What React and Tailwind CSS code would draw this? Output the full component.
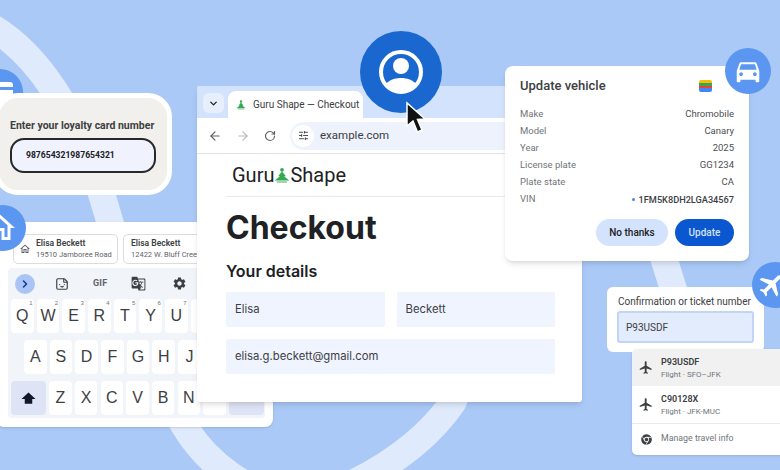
import { ArrowLeft, ArrowRight, ChevronDown, ChevronRight, RotateCw, SlidersHorizontal, Sticker } from "lucide-react";
import { FaChrome } from "react-icons/fa";
import { MdDirectionsCar, MdFlight, MdGTranslate, MdOutlineHome, MdSettings } from "react-icons/md";

const row1 = ["Q", "W", "E", "R", "T", "Y", "U"];
const row2 = ["A", "S", "D", "F", "G", "H", "J"];
const row3 = ["Z", "X", "C", "V", "B", "N"];

const vehicle = [
  ["Make", "Chromobile"],
  ["Model", "Canary"],
  ["Year", "2025"],
  ["License plate", "GG1234"],
  ["Plate state", "CA"],
];

// small green figure used in the logo and the tab
function GuruMark({ className }) {
  return (
    <svg viewBox="0 0 24 24" className={className} fill="#34a853">
      <circle cx="12" cy="3.5" r="2.8" />
      <path d="M12 6 L18 13 L15 13 L23 19.5 L1 19.5 L9 13 L6 13 Z" />
      <rect x="4" y="20.5" width="16" height="2.5" rx="1.2" fill="#81c995" />
    </svg>
  );
}

function Key({ label, num }) {
  return (
    <div className="relative flex h-[34px] w-[22.5px] shrink-0 items-center justify-center rounded-[4px] bg-white font-['Liberation_Sans',sans-serif] text-[16px] text-[#3c4043]">
      {label}
      {num && <span className="absolute right-[1px] top-[0px] text-[6px] leading-[8px] text-[#70757a]">{num}</span>}
    </div>
  );
}

function Address({ name, street, width, icon }) {
  return (
    <div className={`flex h-[30px] shrink-0 items-center gap-[5px] overflow-hidden rounded-[5px] border border-[#dadce0] bg-white pl-[5px] ${width}`}>
      {icon && <MdOutlineHome className="shrink-0 text-[#5f6368]" size={12} />}
      <div className="whitespace-nowrap">
        <div className="text-[8.5px] font-semibold leading-[11px] text-[#3c4043]">{name}</div>
        <div className="text-[7.5px] leading-[11px] text-[#5f6368]">{street}</div>
      </div>
    </div>
  );
}

function Badge({ className, children }) {
  return (
    <div className={`absolute flex h-[46px] w-[46px] items-center justify-center rounded-full bg-[#5b96f0] text-white ${className}`}>
      {children}
    </div>
  );
}

function Suggestion({ code, route, active }) {
  return (
    <div className={`flex h-[37px] items-center pl-[6px] ${active ? "bg-[#f1f1f1]" : "bg-white"}`}>
      <MdFlight className="w-[16px] shrink-0 text-[#3c4043]" size={15} />
      <div className="ml-[7px] pt-[1px]">
        <div className="text-[9px] font-semibold leading-[13px] text-[#3c4043]">{code}</div>
        <div className="text-[8px] leading-[12px] text-[#70757a]">{route}</div>
      </div>
    </div>
  );
}

export default function App() {
  return (
    <div className="relative h-[470px] w-[780px] overflow-hidden bg-[#abc9f7] font-['Roboto',sans-serif]">
      {/* Bogen im Hintergrund */}
      <svg className="absolute inset-0" width="780" height="470" fill="none" stroke="#dfeafc" strokeWidth="27">
        <path d="M-10 26 C35 52 78 110 107 212 C130 290 150 370 185 427 C205 460 250 500 300 497 C350 495 420 450 453 402 L480 340" />
        <path d="M658 240 L680 310" />
      </svg>

      {/* Tastatur */}
      <div className="absolute left-[-4px] top-[222px] h-[205px] w-[277px] rounded-[8px] bg-white pl-[12px] pr-[8px] pt-[12px] shadow-sm">
        <div className="flex gap-[5px] pl-[5px]">
          <Address name="Elisa Beckett" street="19510 Jamboree Road" width="w-[105px]" icon />
          <Address name="Elisa Beckett" street="12422 W. Bluff Creek" width="w-[105px] pl-[7px]" />
        </div>
        <div className="mt-[4px] h-[150px] rounded-[4px] bg-[#f1f4f9]">
          <div className="flex h-[31px] items-center pl-[7px] text-[#3c4043]">
            <div className="flex h-[20px] w-[20px] items-center justify-center rounded-full bg-[#aac4f5] text-[#0b3d91]">
              <ChevronRight size={12} strokeWidth={3} />
            </div>
            <Sticker className="ml-[20px]" size={14} />
            <span className="ml-[24px] text-[9px] font-bold tracking-wide text-[#5f6368]">GIF</span>
            <MdGTranslate className="ml-[24px]" size={15} />
            <MdSettings className="ml-[26px]" size={15} />
          </div>
          <div className="flex gap-[3.2px] pl-[3px]">
            {row1.map((k, i) => (
              <Key key={k} label={k} num={String(i + 1)} />
            ))}
            <Key label="" />
          </div>
          <div className="mt-[7px] flex gap-[3.2px] pl-[16px]">
            {row2.map((k) => (
              <Key key={k} label={k} />
            ))}
          </div>
          <div className="mt-[7px] flex gap-[3.2px] pl-[3px]">
            <div className="flex h-[34px] w-[35px] shrink-0 items-center justify-center rounded-[4px] bg-[#dfe3f6]">
              <svg viewBox="0 0 16 16" width="15" height="15" fill="#111827">
                <path d="M8 1.5 L15.5 8.5 L12 8.5 L12 13.5 L4 13.5 L4 8.5 L0.5 8.5 Z" />
              </svg>
            </div>
            {row3.map((k) => (
              <Key key={k} label={k} />
            ))}
            <Key label="" />
            <div className="h-[34px] w-[35px] shrink-0 rounded-[4px] bg-[#dfe3f6]" />
          </div>
        </div>
      </div>

      {/* Browser */}
      <div className="absolute left-[197px] top-[86px] h-[316px] w-[385px] overflow-hidden rounded-[3px] bg-white shadow-md">
        <div className="flex h-[32px] items-end bg-[#d3e3fd] pl-[6px]">
          <div className="mb-[5px] flex h-[20px] w-[21px] items-center justify-center rounded-[6px] bg-[#e8effc] text-[#202124]">
            <ChevronDown size={11} strokeWidth={3} />
          </div>
          <div className="ml-[4px] flex h-[27px] w-[135px] items-center gap-[7px] rounded-t-[8px] bg-white pl-[8px]">
            <GuruMark className="h-[10px] w-[10px]" />
            <span className="whitespace-nowrap text-[10px] text-[#3c4043]">Guru Shape — Checkout</span>
          </div>
        </div>
        <div className="flex h-[36px] items-center border-b border-[#dfe1e5] pl-[11px] text-[#5f6368]">
          <ArrowLeft size={14} />
          <ArrowRight className="ml-[14px] text-[#b5b9be]" size={14} />
          <RotateCw className="ml-[14px]" size={12} strokeWidth={2.4} />
          <div className="ml-[14px] flex h-[28px] flex-1 items-center rounded-l-[14px] bg-[#edf2fc] pl-[2px]">
            <div className="flex h-[22px] w-[22px] items-center justify-center rounded-full bg-white">
              <SlidersHorizontal className="text-[#3c4043]" size={11} />
            </div>
            <span className="ml-[6px] text-[11.5px] text-[#3c4043]">example.com</span>
          </div>
        </div>
        <div className="pl-[29px] pr-[27px] font-['Inter',sans-serif]">
          <div className="flex h-[43px] items-center border-b border-[#e8eaed] pl-[6px] font-['Roboto',sans-serif] text-[20px] leading-none text-[#202124]">
            Guru<GuruMark className="h-[17px] w-[16px]" />Shape
          </div>
          <h1 className="mt-[11px] text-[32px] font-bold leading-[40px] text-[#202124]">Checkout</h1>
          <h2 className="mt-[12px] text-[16px] font-semibold leading-[22px] text-[#202124]">Your details</h2>
          <div className="mt-[10px] grid grid-cols-2 gap-[12px] text-[11.3px] text-[#3c4043]">
            <div className="flex h-[35px] items-center rounded-[2px] bg-[#f0f4fe] pl-[9px]">Elisa</div>
            <div className="flex h-[35px] items-center rounded-[2px] bg-[#f0f4fe] pl-[9px]">Beckett</div>
            <div className="col-span-2 flex h-[35px] items-center rounded-[2px] bg-[#f0f4fe] pl-[9px]">elisa.g.beckett@gmail.com</div>
          </div>
        </div>
      </div>

      {/* Treuekarte */}
      <Badge className="left-[-23px] top-[69px]">
        <svg viewBox="0 0 26 20" width="26" height="20" fill="white">
          <path d="M0 3 Q0 0 3 0 H23 Q26 0 26 3 V5 H0 Z M0 8 H26 V17 Q26 20 23 20 H3 Q0 20 0 17 Z" />
        </svg>
      </Badge>
      <div className="absolute left-[-6px] top-[93px] h-[102px] w-[178px] rounded-[24px] border-[5px] border-white bg-[#f2f0ec] pl-[11px] pt-[21px]">
        <div className="whitespace-nowrap text-[10.5px] font-bold leading-[14px] text-[#3c4043]">Enter your loyalty card number</div>
        <div className="mt-[5px] flex h-[35px] w-[146px] items-center rounded-[14px] border-2 border-[#26282c] bg-[#f0f3fd] pl-[14px] text-[8.6px] font-bold text-[#202124]">
          987654321987654321
        </div>
      </div>
      <Badge className="left-[-20px] top-[205px]">
        <MdOutlineHome className="mr-[6px] shrink-0" size={36} />
      </Badge>

      {/* Fahrzeug */}
      <div className="absolute left-[505px] top-[66px] h-[195px] w-[244px] rounded-[8px] bg-white px-[15px] pt-[12px] shadow-md">
        <div className="flex items-center justify-between pr-[22px]">
          <span className="text-[13px] font-medium leading-[16px] text-[#3c4043]">Update vehicle</span>
          <div className="flex h-[12px] w-[13px] flex-col overflow-hidden rounded-[2px]">
            <div className="h-[3px] bg-[#fbbc04]" />
            <div className="h-[3px] bg-[#34a853]" />
            <div className="h-[2px] bg-[#ea4335]" />
            <div className="h-[4px] bg-[#4285f4]" />
          </div>
        </div>
        <div className="mt-[12px] text-[9.5px] text-[#70757a]">
          {vehicle.map(([label, value]) => (
            <div key={label} className="flex h-[17px] items-center justify-between">
              <span>{label}</span>
              <span className="text-[#4b4f54]">{value}</span>
            </div>
          ))}
          <div className="flex h-[17px] items-center justify-between">
            <span>VIN</span>
            <span className="flex items-center gap-[4px] text-[9.2px] font-medium text-[#3c4043]">
              <span className="h-[3px] w-[3px] rounded-full bg-[#4285f4]" />
              1FM5K8DH2LGA34567
            </span>
          </div>
        </div>
        <div className="mt-[11px] flex justify-end gap-[7px] text-[10px] font-medium">
          <div className="flex h-[27px] w-[72px] items-center justify-center rounded-full bg-[#d3e3fd] text-[#202124]">No thanks</div>
          <div className="flex h-[27px] w-[59px] items-center justify-center rounded-full bg-[#0b57d0] text-[#d3e3fd]">Update</div>
        </div>
      </div>
      <Badge className="left-[725px] top-[48px]">
        <MdDirectionsCar size={30} />
      </Badge>

      {/* Profil und Mauszeiger */}
      <div className="absolute left-[360px] top-[31px] flex h-[82px] w-[82px] items-center justify-center rounded-full bg-[#1a68cf]">
        <svg viewBox="0 0 46 46" width="46" height="46" fill="none">
          <circle cx="23" cy="23" r="20" stroke="white" strokeWidth="4" />
          <circle cx="23" cy="17" r="8" fill="white" />
          <path d="M8 35 C14 27 32 27 38 35 C32 45 14 45 8 35 Z" fill="white" />
        </svg>
      </div>
      <svg className="absolute left-[405px] top-[101px]" width="22" height="34" viewBox="0 0 22 34">
        <path d="M2 2 L2 25 L8 20 L12.5 31 L17 29 L12.5 18.5 L20 18 Z" fill="#111" stroke="white" strokeWidth="1.5" />
      </svg>

      {/* Ticketnummer */}
      <div className="absolute left-[607px] top-[287px] h-[65px] w-[157px] rounded-[6px] bg-white px-[10px] pt-[9px]">
        <div className="whitespace-nowrap pl-[1px] text-[10px] leading-[12px] text-[#3c4043]">Confirmation or ticket number</div>
        <div className="mt-[3px] flex h-[32px] items-center rounded-[3px] border-2 border-[#c2d5f5] bg-[#e3ecfc] pl-[7px] text-[10px] text-[#3c4043]">
          P93USDF
        </div>
      </div>
      <div className="absolute left-[632px] top-[349px] h-[106px] w-[160px] overflow-hidden rounded-[5px] bg-white shadow-sm">
        <Suggestion code="P93USDF" route="Flight · SFO–JFK" active />
        <Suggestion code="C90128X" route="Flight · JFK-MUC" />
        <div className="flex h-[31px] items-center border-t border-[#e8eaed] pl-[9px] text-[8.8px] text-[#70757a]">
          <FaChrome className="text-[#3c4043]" size={11} />
          <span className="ml-[9px]">Manage travel info</span>
        </div>
      </div>
      <Badge className="left-[752px] top-[262px]">
        <MdFlight className="mr-[6px] shrink-0 rotate-45" size={30} />
      </Badge>
    </div>
  );
}
